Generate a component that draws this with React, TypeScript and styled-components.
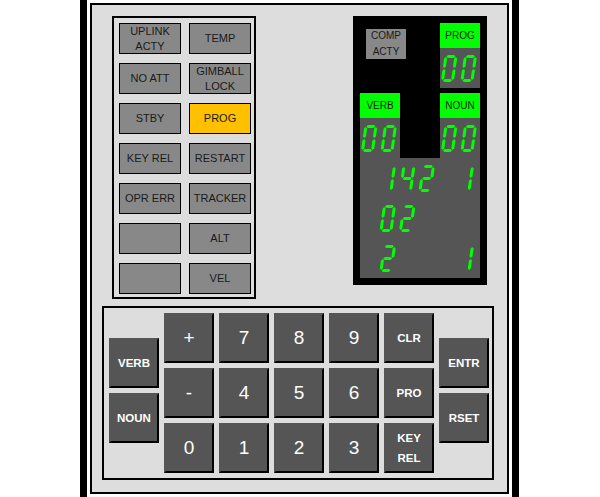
import styled, { createGlobalStyle } from "styled-components";

const GlobalStyle = createGlobalStyle`
	html, body {
		margin: 0;
		padding: 0;
		background: #fff;
	}
	body {
		font-family: "Liberation Sans", Arial, sans-serif;
	}
`;

const Frame = styled.div`
	width: 419px;
	height: 491px;
	margin-left: 80px;
	padding: 3px;
	border-left: 7px solid #000;
	border-right: 7px solid #000;
`;

const Panel = styled.div`
	box-sizing: border-box;
	width: 419px;
	height: 491px;
	padding-top: 11px;
	border: 2px solid #000;
	background: #ddd;
`;

const TopRow = styled.div`
	display: flex;
	justify-content: space-between;
	align-items: flex-start;
	padding: 0 20px;
`;

const LampBox = styled.div`
	display: grid;
	grid-template-columns: 62px 62px;
	grid-auto-rows: 31px;
	column-gap: 8px;
	row-gap: 9px;
	padding: 5px 3px 3px 5px;
	border: 2px solid #000;
`;

const Lamp = styled.div<{ $lit?: boolean }>`
	box-sizing: border-box;
	display: flex;
	align-items: center;
	justify-content: center;
	text-align: center;
	border: 1px solid #000;
	background: ${(p) => (p.$lit ? "#ffc000" : "#888")};
	color: #1a1a1a;
	font-size: 11px;
	line-height: 15px;
`;

const Display = styled.div`
	display: grid;
	grid-template-columns: repeat(3, 40px);
	grid-template-rows: 25px 40px 5px 25px 40px 40px 40px 40px;
	padding: 7px;
	background: #000;
`;

const CompActy = styled.div`
	grid-column: 1;
	grid-row: 1 / 3;
	width: 40px;
	height: 30px;
	margin: 6px 0 0 6px;
	display: flex;
	align-items: center;
	justify-content: center;
	text-align: center;
	background: #888;
	color: #1a1a1a;
	font-size: 10px;
	line-height: 16px;
`;

const GreenLabel = styled.div<{ $col: number; $row: number }>`
	grid-column: ${(p) => p.$col};
	grid-row: ${(p) => p.$row};
	display: flex;
	align-items: center;
	justify-content: center;
	background: #00ff00;
	color: #1a1a1a;
	font-size: 10px;
`;

const DigitWindow = styled.div<{ $col: number; $row: number }>`
	grid-column: ${(p) => p.$col};
	grid-row: ${(p) => p.$row};
	background: #555;
`;

const Register = styled.div<{ $row: number }>`
	grid-column: 1 / 4;
	grid-row: ${(p) => p.$row};
	background: #555;
`;

const Keypad = styled.div`
	display: flex;
	gap: 5px;
	width: 380px;
	margin: 7px 0 0 10px;
	padding: 5px 3px 5px 5px;
	border: 2px solid #000;
`;

const SideColumn = styled.div`
	display: flex;
	flex-direction: column;
	gap: 5px;
	padding-top: 25px;
`;

const KeyGrid = styled.div`
	display: grid;
	grid-template-columns: repeat(5, 50px);
	grid-auto-rows: 50px;
	gap: 5px;
`;

const Key = styled.div<{ $big?: boolean }>`
	box-sizing: border-box;
	width: 50px;
	height: 50px;
	display: flex;
	align-items: center;
	justify-content: center;
	text-align: center;
	border: 2px outset #555;
	background: #555;
	color: #fff;
	font-weight: ${(p) => (p.$big ? "normal" : "bold")};
	font-size: ${(p) => (p.$big ? "19px" : "11.5px")};
	line-height: 20.5px;
`;

// seven segment geometry, one glyph 13 x 27 inside a 40px tall cell
const THICK = 3;
const HALF = THICK / 2;
const GAP = 0.5;
const W = 13;
const TOP = 7;
const BOTTOM = 34;
const XL = HALF;
const XR = W - HALF;
const YT = TOP + HALF;
const YB = BOTTOM - HALF;
const YM = (TOP + BOTTOM) / 2;

function hSeg(x1: number, x2: number, y: number) {
	const a = x1 + GAP;
	const b = x2 - GAP;
	return `${a},${y} ${a + HALF},${y - HALF} ${b - HALF},${y - HALF} ${b},${y} ${b - HALF},${y + HALF} ${a + HALF},${y + HALF}`;
}

function vSeg(x: number, y1: number, y2: number) {
	const a = y1 + GAP;
	const b = y2 - GAP;
	return `${x},${a} ${x + HALF},${a + HALF} ${x + HALF},${b - HALF} ${x},${b} ${x - HALF},${b - HALF} ${x - HALF},${a + HALF}`;
}

const SEGMENTS: Record<string, string> = {
	a: hSeg(XL, XR, YT),
	b: vSeg(XR, YT, YM),
	c: vSeg(XR, YM, YB),
	d: hSeg(XL, XR, YB),
	e: vSeg(XL, YM, YB),
	f: vSeg(XL, YT, YM),
	g: hSeg(XL, XR, YM),
};

const DIGITS: Record<string, string> = {
	"0": "abcdef",
	"1": "bc",
	"2": "abged",
	"3": "abgcd",
	"4": "fgbc",
	"5": "afgcd",
	"6": "afgedc",
	"7": "abc",
	"8": "abcdefg",
	"9": "abcdfg",
};

interface ISegmentsProps {
	value: string;
	width: number;
	start: number;
}

function SevenSegment({ value, width, start }: ISegmentsProps) {
	return (
		<svg width={width} height={40} role="img" aria-label={value.trim()}>
			{value.split("").map((ch, i) => (
				<g
					key={i}
					transform={`translate(${start + i * 19.5},0) translate(0,${BOTTOM}) skewX(-8) translate(0,${-BOTTOM})`}
					fill="#00ff00"
				>
					{(DIGITS[ch] || "").split("").map((s) => (
						<polygon key={s} points={SEGMENTS[s]} />
					))}
				</g>
			))}
		</svg>
	);
}

const lamps: { text: string[]; lit?: boolean }[] = [
	{ text: ["UPLINK", "ACTY"] },
	{ text: ["TEMP"] },
	{ text: ["NO ATT"] },
	{ text: ["GIMBALL", "LOCK"] },
	{ text: ["STBY"] },
	{ text: ["PROG"], lit: true },
	{ text: ["KEY REL"] },
	{ text: ["RESTART"] },
	{ text: ["OPR ERR"] },
	{ text: ["TRACKER"] },
	{ text: [] },
	{ text: ["ALT"] },
	{ text: [] },
	{ text: ["VEL"] },
];

const keys = ["+", "7", "8", "9", "CLR", "-", "4", "5", "6", "PRO", "0", "1", "2", "3", "KEY REL"];

const registers = ["142 1", "02   ", "2   1"];

function Lines({ text }: { text: string[] }) {
	return (
		<span>
			{text.map((line, i) => (
				<span key={i}>
					{i > 0 && <br />}
					{line}
				</span>
			))}
		</span>
	);
}

function App() {
	return (
		<>
			<GlobalStyle />
			<Frame>
				<Panel>
					<TopRow>
						<LampBox>
							{lamps.map((l, i) => (
								<Lamp key={i} $lit={l.lit}>
									<Lines text={l.text} />
								</Lamp>
							))}
						</LampBox>
						<Display>
							<CompActy>
								<Lines text={["COMP", "ACTY"]} />
							</CompActy>
							<GreenLabel $col={3} $row={1}>PROG</GreenLabel>
							<DigitWindow $col={3} $row={2}>
								<SevenSegment value="00" width={40} start={0.8} />
							</DigitWindow>
							<GreenLabel $col={1} $row={4}>VERB</GreenLabel>
							<GreenLabel $col={3} $row={4}>NOUN</GreenLabel>
							<DigitWindow $col={1} $row={5}>
								<SevenSegment value="00" width={40} start={0.8} />
							</DigitWindow>
							<DigitWindow $col={3} $row={5}>
								<SevenSegment value="00" width={40} start={0.8} />
							</DigitWindow>
							{registers.map((r, i) => (
								<Register key={i} $row={6 + i}>
									<SevenSegment value={r} width={120} start={19.3} />
								</Register>
							))}
						</Display>
					</TopRow>
					<Keypad>
						<SideColumn>
							<Key>VERB</Key>
							<Key>NOUN</Key>
						</SideColumn>
						<KeyGrid>
							{keys.map((k) => (
								<Key key={k} $big={k.length === 1}>
									<Lines text={k.split(" ")} />
								</Key>
							))}
						</KeyGrid>
						<SideColumn>
							<Key>ENTR</Key>
							<Key>RSET</Key>
						</SideColumn>
					</Keypad>
				</Panel>
			</Frame>
		</>
	);
}

export default App;
